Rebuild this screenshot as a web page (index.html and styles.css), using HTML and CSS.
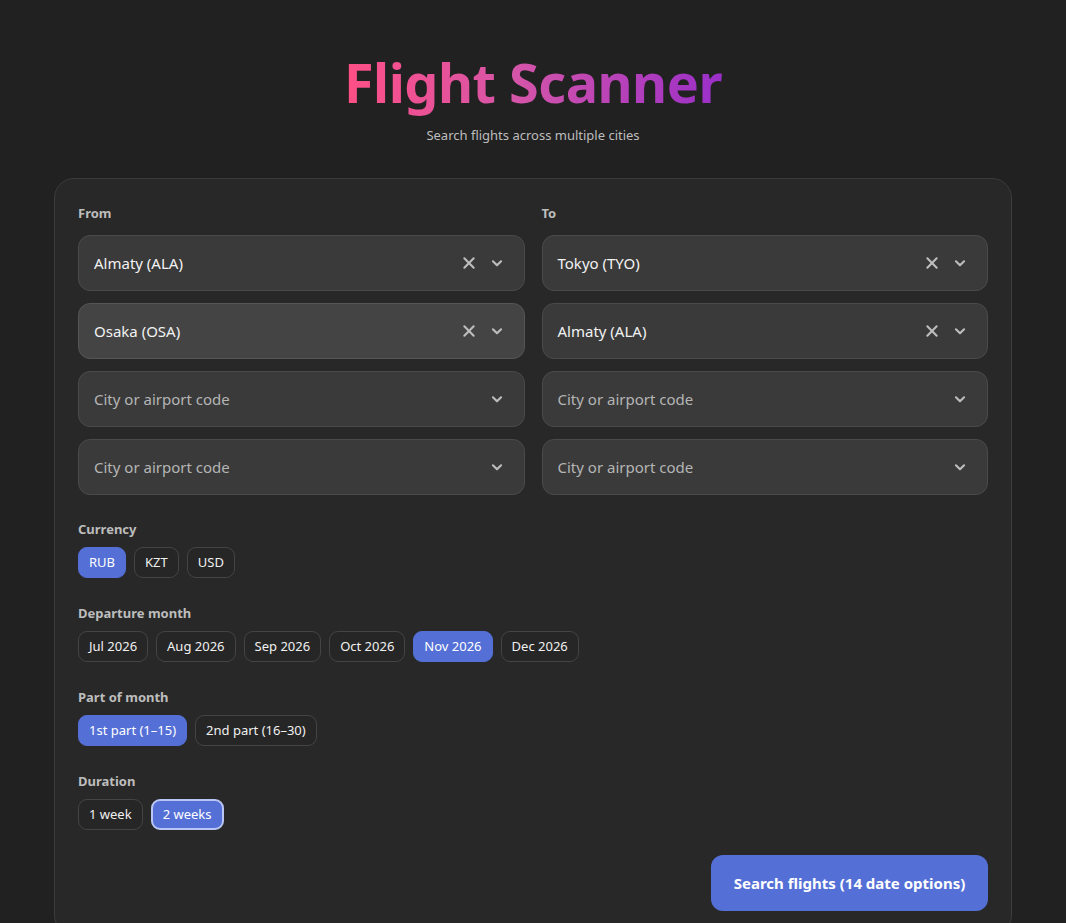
FILE: index.html
```html
<!DOCTYPE html>
<html lang="en">
<head>
<meta charset="utf-8">
<title>Flight Scanner</title>
<link rel="stylesheet" href="styles.css">
</head>
<body>
<main class="page">
  <header class="hero">
    <h1 class="title">Flight Scanner</h1>
    <p class="subtitle">Search flights across multiple cities</p>
  </header>

  <section class="card">
    <div class="routes">
      <div class="col">
        <div class="label">From</div>
        <div class="field"><span class="value">Almaty (ALA)</span><span class="icons"><svg class="ic x" viewBox="0 0 12 12"><path d="M2 2L10 10M10 2L2 10"/></svg><svg class="ic chev" viewBox="0 0 12 12"><path d="M2.5 4.5L6 8L9.5 4.5"/></svg></span></div>
        <div class="field hover"><span class="value">Osaka (OSA)</span><span class="icons"><svg class="ic x" viewBox="0 0 12 12"><path d="M2 2L10 10M10 2L2 10"/></svg><svg class="ic chev" viewBox="0 0 12 12"><path d="M2.5 4.5L6 8L9.5 4.5"/></svg></span></div>
        <div class="field"><span class="value placeholder">City or airport code</span><span class="icons"><svg class="ic chev" viewBox="0 0 12 12"><path d="M2.5 4.5L6 8L9.5 4.5"/></svg></span></div>
        <div class="field"><span class="value placeholder">City or airport code</span><span class="icons"><svg class="ic chev" viewBox="0 0 12 12"><path d="M2.5 4.5L6 8L9.5 4.5"/></svg></span></div>
      </div>
      <div class="col">
        <div class="label">To</div>
        <div class="field"><span class="value">Tokyo (TYO)</span><span class="icons"><svg class="ic x" viewBox="0 0 12 12"><path d="M2 2L10 10M10 2L2 10"/></svg><svg class="ic chev" viewBox="0 0 12 12"><path d="M2.5 4.5L6 8L9.5 4.5"/></svg></span></div>
        <div class="field"><span class="value">Almaty (ALA)</span><span class="icons"><svg class="ic x" viewBox="0 0 12 12"><path d="M2 2L10 10M10 2L2 10"/></svg><svg class="ic chev" viewBox="0 0 12 12"><path d="M2.5 4.5L6 8L9.5 4.5"/></svg></span></div>
        <div class="field"><span class="value placeholder">City or airport code</span><span class="icons"><svg class="ic chev" viewBox="0 0 12 12"><path d="M2.5 4.5L6 8L9.5 4.5"/></svg></span></div>
        <div class="field"><span class="value placeholder">City or airport code</span><span class="icons"><svg class="ic chev" viewBox="0 0 12 12"><path d="M2.5 4.5L6 8L9.5 4.5"/></svg></span></div>
      </div>
    </div>

    <div class="group">
      <div class="label">Currency</div>
      <div class="chips">
        <button class="chip active">RUB</button>
        <button class="chip">KZT</button>
        <button class="chip">USD</button>
      </div>
    </div>

    <div class="group">
      <div class="label">Departure month</div>
      <div class="chips">
        <button class="chip">Jul 2026</button>
        <button class="chip">Aug 2026</button>
        <button class="chip">Sep 2026</button>
        <button class="chip">Oct 2026</button>
        <button class="chip active">Nov 2026</button>
        <button class="chip">Dec 2026</button>
      </div>
    </div>

    <div class="group">
      <div class="label">Part of month</div>
      <div class="chips">
        <button class="chip active">1st part (1–15)</button>
        <button class="chip">2nd part (16–30)</button>
      </div>
    </div>

    <div class="group">
      <div class="label">Duration</div>
      <div class="chips">
        <button class="chip">1 week</button>
        <button class="chip active focus">2 weeks</button>
      </div>
    </div>

    <div class="actions">
      <button class="search">Search flights (14 date options)</button>
    </div>
  </section>
</main>
</body>
</html>
```

FILE: styles.css
```css
* { box-sizing: border-box; }

html, body {
  margin: 0;
  padding: 0;
  background: #212121;
  color: #ececec;
  font-family: "Noto Sans", "Open Sans", sans-serif;
}

.page {
  width: 958px;
  margin: 0 auto;
  padding-top: 44px;
}

.hero {
  text-align: center;
}

.title {
  margin: 0;
  font-size: 54px;
  line-height: 76px;
  font-weight: 700;
  letter-spacing: -0.5px;
  display: inline-block;
  background: linear-gradient(90deg, #ff4f86 0%, #d555a8 45%, #9a2fc9 100%);
  -webkit-background-clip: text;
  background-clip: text;
  color: transparent;
}

.subtitle {
  margin: 6px 0 0;
  font-size: 13px;
  line-height: 18px;
  color: #bdbdbd;
}

.card {
  margin-top: 34px;
  background: #282828;
  border: 1px solid #3c3c3c;
  border-radius: 20px;
  padding: 25px 23px 23px;
}

.routes {
  display: grid;
  grid-template-columns: 1fr 1fr;
  column-gap: 17px;
}

.col {
  display: flex;
  flex-direction: column;
  gap: 12px;
}

.label {
  font-size: 13px;
  line-height: 18px;
  font-weight: 700;
  color: #bdbdbd;
}

.col .label {
  margin-bottom: 1px;
}

.field {
  height: 56px;
  border: 1px solid #4a4a4a;
  background: #3a3a3a;
  border-radius: 12px;
  display: flex;
  align-items: center;
  padding: 0 20px 0 15px;
  font-size: 15px;
}

.field.hover {
  background: #444444;
  border-color: #555555;
}

.value {
  flex: 1;
  color: #f2f2f2;
}

.value.placeholder {
  color: #b5b5b5;
}

.icons {
  display: flex;
  align-items: center;
  gap: 14px;
}

.ic {
  width: 14px;
  height: 14px;
  fill: none;
  stroke: #bdbdbd;
  stroke-width: 1.8;
  stroke-linecap: round;
  stroke-linejoin: round;
}

.group {
  margin-top: 25px;
  display: flex;
  flex-direction: column;
  gap: 9px;
}

.group + .group {
  margin-top: 26px;
}

.chips {
  display: flex;
  gap: 8px;
}

.chip {
  font-family: inherit;
  font-size: 13px;
  line-height: 17px;
  height: 31px;
  padding: 0 10px;
  color: #f0f0f0;
  background: #262626;
  border: 1px solid #444444;
  border-radius: 9px;
  cursor: pointer;
}

.chip.active {
  background: #5470d6;
  border-color: #5470d6;
  color: #ffffff;
}

.chip.focus {
  border: 2px solid #b9c6f3;
}

.actions {
  display: flex;
  justify-content: flex-end;
  margin-top: 25px;
}

.search {
  font-family: inherit;
  width: 277px;
  height: 56px;
  border: none;
  border-radius: 12px;
  background: #5470d6;
  color: #ffffff;
  font-size: 15px;
  font-weight: 700;
  cursor: pointer;
}
```
